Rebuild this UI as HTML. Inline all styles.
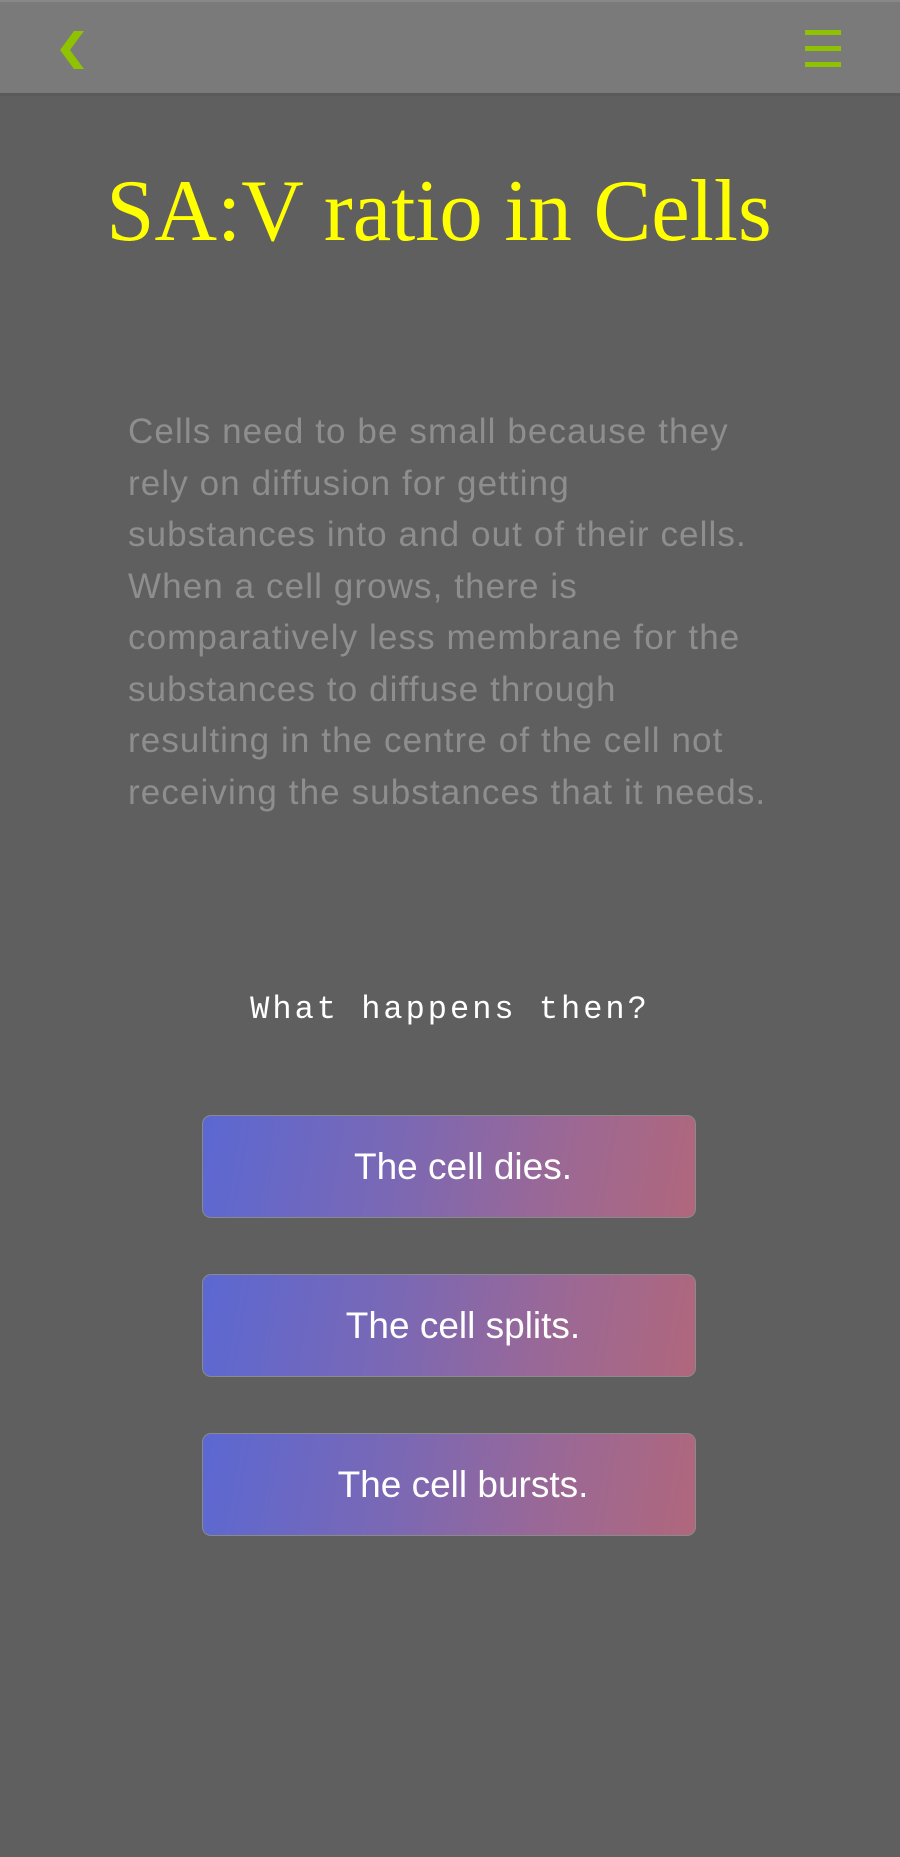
<!DOCTYPE html>
<html><head><meta charset="utf-8"><style>
html,body{margin:0;padding:0}
body{width:900px;height:1857px;background:#5f5f5f;position:relative;overflow:hidden;font-family:"Liberation Sans",sans-serif}
.hdr{position:absolute;left:0;top:0;width:900px;height:96px;background:#7a7a7a;border-top:2px solid #888;box-sizing:border-box;border-bottom:3px solid #5a5a5a}
.menu{position:absolute;left:805px;width:36px;height:5px;background:#8fc200}
h1{position:absolute;left:0;width:878px;top:162px;margin:0;text-align:center;font-family:"Liberation Serif",serif;font-weight:normal;color:#ffff00;font-size:88px;line-height:100px;transform:scaleX(0.985);transform-origin:439px 0}
.p{position:absolute;left:128px;top:406px;color:#8e8e8e;font-size:35px;line-height:51.5px;white-space:nowrap;letter-spacing:1.1px}
.q{position:absolute;left:0;width:900px;top:988px;text-align:center;font-family:"Liberation Mono",monospace;color:#fff;font-size:32px;letter-spacing:3px;line-height:44px}
.b{position:absolute;left:202px;width:494px;height:103px;border:1px solid #8a8a8a;box-sizing:border-box;border-radius:9px;background:linear-gradient(100deg,#5b68d2 0%,#7b68b4 40%,#9a6896 70%,#b0677c 100%);color:#fff;font-size:37px;text-align:center;line-height:101px;padding-left:28px}
</style></head><body>
<div class="hdr"></div>
<svg style="position:absolute;left:54px;top:30px" width="34" height="40" viewBox="0 0 34 40"><polygon points="20,1 30,1 16,20 30,39 20,39 6,20" fill="#8fc200"/></svg>
<div class="menu" style="top:30px"></div>
<div class="menu" style="top:46px"></div>
<div class="menu" style="top:62px"></div>
<h1>SA:V ratio in Cells</h1>
<div class="p">Cells need to be small because they<br>rely on diffusion for getting<br>substances into and out of their cells.<br>When a cell grows, there is<br>comparatively less membrane for the<br>substances to diffuse through<br>resulting in the centre of the cell not<br>receiving the substances that it needs.</div>
<div class="q">What happens then?</div>
<div class="b" style="top:1115px">The cell dies.</div>
<div class="b" style="top:1274px">The cell splits.</div>
<div class="b" style="top:1433px">The cell bursts.</div>
</body></html>
